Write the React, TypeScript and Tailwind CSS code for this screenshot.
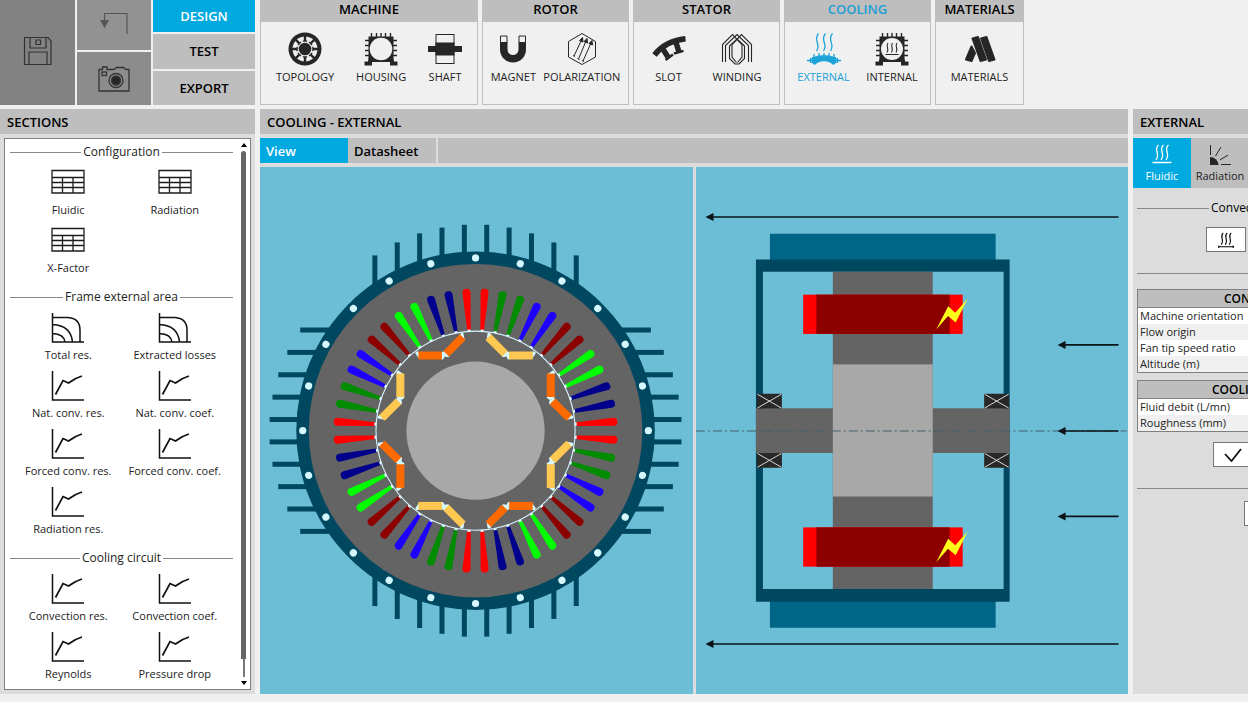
import type { ReactNode } from "react";

const INK = "#262626";

/* ---------- toolbar icons ---------- */

function SaveIcon() {
  return (
    <svg width="30" height="30" viewBox="0 0 30 30" fill="none" stroke="#333" strokeWidth="1.2" aria-hidden="true">
      <path d="M1.5 1.5H25l3 3.500v23.500H1.500z" />
      <path d="M7 1.500v10.500h16V1.500M13 4h4.500v4.500H13zM6 28.500V16h18v12.500" />
    </svg>
  );
}

function UndoIcon() {
  return (
    <svg width="30" height="24" viewBox="0 0 30 24" fill="none" stroke="#555" strokeWidth="1.200" aria-hidden="true">
      <path d="M28 23V2.500H5.500V10" />
      <path d="M2 9.500h7L5.500 16z" fill="#555" stroke="#555" />
    </svg>
  );
}

function CameraIcon() {
  return (
    <svg width="34" height="28" viewBox="0 0 34 28" fill="none" stroke="#333" strokeWidth="1.300" aria-hidden="true">
      <path d="M2 4.500h3.500V2h4.500v2.500h7L19.500 2.500h7l2.500 2h3V26H2z" />
      <rect x="5" y="7" width="4.500" height="3.500" />
      <circle cx="19" cy="15.500" r="7" />
      <circle cx="19" cy="15.500" r="4.500" fill={INK} />
    </svg>
  );
}

function TopologyIcon() {
  const spokes = Array.from({ length: 8 }, (_, i) => i * 45);
  return (
    <svg width="34" height="34" viewBox="0 0 34 34" aria-hidden="true">
      <circle cx="17" cy="17" r="16.500" fill={INK} />
      <circle cx="17" cy="17" r="12.500" fill="#f0f0f0" />
      {spokes.map((a) => (
        <path key={a} d="M15.800 4h2.400v4.500h1v1.300h-4.400V8.500h1z" fill={INK} transform={`rotate(${a} 17 17)`} />
      ))}
      <circle cx="17" cy="17" r="6.300" fill={INK} />
    </svg>
  );
}

function FrameIcon({ children, hole = 11.3 }: { children?: ReactNode; hole?: number }) {
  return (
    <svg width="34" height="34" viewBox="0 0 34 34" aria-hidden="true">
      <path d="M7.500 1v5M12.500 1v5M17 1v5M21.500 1v5M26.500 1v5M1 8.500h5M1 13.500h5M1 18.500h5M1 23.500h5M28 8.500h5M28 13.500h5M28 18.500h5M28 23.500h5" stroke={INK} strokeWidth="1.400" />
      <path d="M4.500 4.500h25v21l.500 4h3.500v4H26V30H8v3.500H.500v-4H4l.500-4z" fill={INK} />
      <circle cx="17" cy="17" r={hole} fill="#f0f0f0" />
      {children}
    </svg>
  );
}

function InternalIcon() {
  return (
    <FrameIcon hole={11}>
      <path d="M13 11c-3 4 2 5-1 9.500M17.500 11c-3 4 2 5-1 9.500M22 11c-3 4 2 5-1 9.500M10.500 22.500h13" fill="none" stroke={INK} strokeWidth="1.100" />
    </FrameIcon>
  );
}

function ShaftIcon() {
  return (
    <svg width="34" height="34" viewBox="0 0 34 34" aria-hidden="true">
      <rect x="8" y="2.500" width="18" height="29" fill="none" stroke={INK} strokeWidth="1" />
      <path d="M7.500 10.500h19V14H34v6h-7.500v3.500h-19V20H0v-6h7.500z" fill={INK} />
    </svg>
  );
}

function MagnetIcon() {
  return (
    <svg width="34" height="34" viewBox="0 0 34 34" aria-hidden="true">
      <path d="M4 10v7.500a13 13 0 0 0 26 0V10h-7.500v7.500a5.500 5.500 0 0 1-11 0V10z" fill={INK} />
      <path d="M4.500 4h6.500v6.500H4.500zM23 4h6.500v6.500H23z" fill="#f0f0f0" stroke={INK} />
    </svg>
  );
}

function PolarizationIcon() {
  return (
    <svg width="34" height="34" viewBox="0 0 34 34" fill="none" stroke={INK} strokeWidth="1" aria-hidden="true">
      <path d="M17 1.500l13.500 8v15.500L17 32.500 3.500 25V9.500z" />
      <path d="M9 24l7.500-16M13.500 27L21 9M18 29l8-18M8 23.500l2 1M12.500 26.500l2 1M17 28.500l2 1" />
      <path d="M17.500 5.500l-3 3 3.500 1.500zM22 6.500l-3 3 3.500 1.500zM27 8.500l-3 3 3.500 1.500z" fill={INK} />
    </svg>
  );
}

function SlotIcon() {
  return (
    <svg width="34" height="34" viewBox="0 0 34 34" fill="none" stroke={INK} aria-hidden="true">
      <path d="M2.500 23Q13 9 33.500 6.800" strokeWidth="5.500" />
      <path d="M9.500 15L16 25M23.500 9L27 20" strokeWidth="5.500" />
      <path d="M13.500 28L21 22.500M22 21.500L31.500 18.800" strokeWidth="2.400" />
    </svg>
  );
}

function WindingIcon() {
  return (
    <svg width="34" height="34" viewBox="0 0 34 34" fill="none" stroke={INK} strokeWidth="1.100" aria-hidden="true">
      <path d="M2.500 30V12.500L12.500 2.500 22 12.500V25L17.500 30.500M31.500 30V12.500L21.500 2.500 12 12.500V25l4.500 5.500" />
      <path d="M5.500 30V13.500L17 2.500l11.500 11V30" />
      <path d="M17 7l7.500 7v12.500L19 32h-4l-5.500-5.500V14z" />
    </svg>
  );
}

function ExternalIcon() {
  return (
    <svg width="34" height="34" viewBox="0 0 34 34" fill="none" stroke="#1ca4d8" aria-hidden="true">
      <path d="M11.500 1.500c-6 7 3 10-2 17.500M18.500 1.500c-6 7 3 10-2 17.500M25.500 1.500c-6 7 3 10-2 17.500" strokeWidth="1.300" />
      <path d="M4.500 25.500q12.500-5 25 0v5l-3 2.500q-9.500-8-19 0l-3-2.500z" fill="#1ca4d8" stroke="none" />
      <path d="M0 28.500h34M3.500 26v5M30.500 26v5" strokeWidth="1.300" />
      <path d="M7 22v4M12 21v4M17 21v4M22 21v4M27 22v4" strokeWidth="1.300" />
    </svg>
  );
}

function MaterialsIcon() {
  return (
    <svg width="34" height="34" viewBox="0 0 34 34" stroke={INK} fill={INK} strokeWidth="2" strokeLinejoin="round" aria-hidden="true">
      <path d="M8.500 14.500L12 21 8.500 29 3 27.500zM9.500 6.500L15 5l8 22.500-5.500 1.500zM18 6.500L23.500 5l8 22.500L26 29z" />
    </svg>
  );
}

/* ---------- section icons ---------- */

function TableIcon() {
  return (
    <svg width="34" height="32" viewBox="0 0 34 32" fill="none" stroke="#1c1c1c" strokeWidth="1.300" aria-hidden="true">
      <path d="M1 2.500h32V25H1zM1 9.500h32M1 14.500h32M1 19.500h32M11.500 9.500V25M22 9.500V25" />
    </svg>
  );
}

function AreaIcon() {
  return (
    <svg width="34" height="32" viewBox="0 0 34 32" fill="none" stroke="#111" strokeWidth="1.500" aria-hidden="true">
      <path d="M1.500 0v29H33M1.500 4.500H17Q29 5.500 29 17v12M1.500 11.500Q20 12.500 21.500 29M1.500 20.500Q13 21 14 29" />
    </svg>
  );
}

function ChartIcon() {
  return (
    <svg width="34" height="32" viewBox="0 0 34 32" fill="none" stroke="#111" strokeWidth="1.500" aria-hidden="true">
      <path d="M1.500 0v29H33" />
      <path d="M4.500 23.500L12 9.500l5.500 2.500Q24 7 31 5" strokeWidth="1.700" />
    </svg>
  );
}

function HeatIcon({ small = false }: { small?: boolean }) {
  return (
    <svg width={small ? 16 : 20} height={small ? 16 : 20} viewBox="0 0 20 20" fill="none" stroke="currentColor" strokeWidth="1.300" aria-hidden="true">
      <path d="M6.500 1C1 6 9 9 4 16M11.500 1C6 6 14 9 9 16M16.500 1c-5.500 5 2.500 8-2.500 15M.500 18.500h19" />
      {small && <path d="M1 17v3M19 17v3" />}
    </svg>
  );
}

function RadiationIcon() {
  return (
    <svg width="22" height="22" viewBox="0 0 22 22" fill="none" stroke={INK} aria-hidden="true">
      <path d="M1.500 1v10M6.500 12L12 3M11 16l8-5M12 20.500h10" />
      <path d="M1 13a8.500 8.500 0 0 1 8.500 8H1z" fill={INK} stroke="none" />
    </svg>
  );
}

/* ---------- ribbon ---------- */

type Tool = { label: string; icon: ReactNode };

function RibbonGroup({ title, width, tools, active }: { title: string; width: string; tools: Tool[]; active?: string }) {
  return (
    <section className={`flex flex-col ${width}`}>
      <h2 className={`h-[21px] bg-[#bebebe] text-center text-[13px] leading-[19px] font-semibold ${active ? "text-[#1c9fd6]" : "text-black"}`}>{title}</h2>
      <div className="flex flex-1 items-start justify-around border border-[#bebebe] bg-[#f0f0f0] px-1 pt-[10px]">
        {tools.map((t) => (
          <button key={t.label} type="button" className={`flex flex-col items-center gap-[3px] text-[11px] leading-4 ${t.label === active ? "text-[#1c9fd6]" : "text-[#222]"}`}>
            {t.icon}
            {t.label}
          </button>
        ))}
      </div>
    </section>
  );
}

/* ---------- sections panel ---------- */

type Item = { label: string; icon: ReactNode };

const sections: { title: string; items: Item[] }[] = [
  {
    title: "Configuration",
    items: ["Fluidic", "Radiation", "X-Factor"].map((label) => ({ label, icon: <TableIcon /> })),
  },
  {
    title: "Frame external area",
    items: [
      { label: "Total res.", icon: <AreaIcon /> },
      { label: "Extracted losses", icon: <AreaIcon /> },
      ...["Nat. conv. res.", "Nat. conv. coef.", "Forced conv. res.", "Forced conv. coef.", "Radiation res."].map((label) => ({ label, icon: <ChartIcon /> })),
    ],
  },
  {
    title: "Cooling circuit",
    items: ["Convection res.", "Convection coef.", "Reynolds", "Pressure drop"].map((label) => ({ label, icon: <ChartIcon /> })),
  },
];

function SectionsPanel() {
  return (
    <aside className="flex flex-col bg-[#dcdcdc]">
      <h2 className="h-[25px] bg-[#bebebe] px-[7px] text-[13px] leading-[26px] font-semibold">SECTIONS</h2>
      <div className="m-1 flex flex-1 border border-[#808080] bg-white">
        <div className="flex flex-1 flex-col gap-[13px] py-[5px] pl-[5px]">
          {sections.map((s) => (
            <section key={s.title}>
              <h3 className="flex h-4 items-center gap-[2px] text-xs leading-4 text-[#222]">
                <span className="h-px flex-1 bg-[#888]" />
                {s.title}
                <span className="h-px flex-1 bg-[#888]" />
              </h3>
              <div className="grid grid-cols-2 px-[5px]">
                {s.items.map((it) => (
                  <button key={it.label} type="button" className="flex h-[58px] flex-col items-center gap-[2px] pt-2 text-[11px] leading-4 whitespace-nowrap text-[#222]">
                    {it.icon}
                    {it.label}
                  </button>
                ))}
              </div>
            </section>
          ))}
        </div>
        <div className="ml-2 flex w-[9px] flex-col items-center pt-1 pr-1 pb-1" aria-hidden="true">
          <svg width="6" height="4" viewBox="0 0 6 4"><path d="M0 4L3 0l3 4z" /></svg>
          <span className="mt-1 w-[5px] flex-1 rounded-t-sm bg-[#666]" />
          <span className="mb-1 h-[18px] w-[2px] bg-[#777]" />
          <svg width="6" height="4" viewBox="0 0 6 4"><path d="M0 0l3 4 3-4z" /></svg>
        </div>
      </div>
    </aside>
  );
}

/* ---------- machine drawings ---------- */

const CX = 475.8;
const CY = 430.7;
const PHASES = ["#ff0000", "#008c00", "#1e00ff", "#8c0000", "#00ff00", "#00008c"];
const FIN_OFFSETS = [-100.8, -78.4, -56, -33.6, -11.2, 11.2, 33.6, 56, 78.4, 100.8];

function RadialView() {
  return (
    <svg className="h-full w-full bg-[#6cbdd6]" viewBox="260 167 433 527" role="img" aria-label="Radial view">
      <g transform={`translate(${CX} ${CY})`}>
        {[0, 90, 180, 270].map((a) => (
          <g key={a} transform={`rotate(${a})`} fill="#004860">
            {FIN_OFFSETS.map((x) => {
              const r = Math.sqrt(179.5 * 179.5 - x * x);
              return <rect key={x} x={x - 2.5} y={-r - 27} width="5" height="36" />;
            })}
          </g>
        ))}
        <circle r="179.500" fill="#004860" />
        <circle r="167" fill="#646464" />
        {Array.from({ length: 24 }, (_, i) => (
          <circle key={i} cy="-173" r="3.600" fill="#d5f8ff" transform={`rotate(${i * 15})`} />
        ))}
        {Array.from({ length: 48 }, (_, i) => (
          <g key={i} transform={`rotate(${i * 7.5 - 3.75})`}>
            <path d="M-1.800-101L-4-138.300a4 4 0 0 1 8 0L1.800-101z" fill={PHASES[Math.floor(i / 2) % 6]} />
            <rect x="-1.500" y="-101.500" width="3" height="2" fill="#e4faff" />
          </g>
        ))}
        <circle r="99.700" fill="none" stroke="#d5f4ff" strokeWidth="1.100" />
        {Array.from({ length: 8 }, (_, i) => {
          const fill = i % 2 === 0 ? "#ff6a00" : "#ffc850";
          return (
            <g key={i} transform={`rotate(${i * 45 - 22.5})`}>
              {[1, -1].map((s) => (
                <g key={s} transform={`scale(${s} 1)`}>
                  <g transform="translate(0 -81.500) rotate(-22.500)">
                    <path d="M1-3L3-4 3 4 1.500 4-.500 1z" fill="#d8fbff" />
                    <path d="M25.500-4h2q2 .500 1.500 2l-3.500 5z" fill="#d8fbff" />
                    <rect x="2.500" y="-4" width="23.500" height="8" fill={fill} />
                  </g>
                </g>
              ))}
            </g>
          );
        })}
        <circle r="69.200" fill="#a8a8a8" />
      </g>
    </svg>
  );
}

function Arrow({ x, y }: { x: number; y: number }) {
  return (
    <g>
      <path d={`M${x + 5} ${y}H1118`} stroke="#0a1418" strokeWidth="1.600" />
      <path d={`M${x} ${y}l8-4v8z`} fill="#0a1418" />
    </g>
  );
}

function AxialView() {
  return (
    <svg className="h-full w-full bg-[#6cbdd6]" viewBox="695 167 433 527" role="img" aria-label="Axial view">
      <Arrow x={704.5} y={216.7} />
      <path d="M769 233.500h226V262H769zM769 600h226v28H769z" fill="#006688" />
      <path fillRule="evenodd" d="M755 259.300h254V602H755zM762 271.500v317.700h241V271.500z" fill="#004860" />
      <path d="M832 271.500h100v317.700H832zM755 408.300h254v44.700H755z" fill="#646464" />
      <rect x="832" y="364.300" width="100" height="132.300" fill="#a8a8a8" />
      {[294.5, 527.5].map((y) => (
        <g key={y} transform={`translate(0 ${y})`}>
          <rect x="802.300" y="0" width="159.700" height="39.300" fill="#ff0000" />
          <rect x="815.500" y="0" width="133.500" height="39.300" fill="#8c0000" />
          <path d="M935.500 35l12-23.500 7 6.500 12.500-14-12 24-7.700-6.700z" fill="#ffff1a" />
        </g>
      ))}
      {[[756, 393.7], [983.5, 393.7], [756, 453], [983.5, 453]].map(([x, y]) => (
        <g key={`${x}-${y}`} transform={`translate(${x} ${y})`}>
          <rect width="25" height="14.800" fill="#282828" />
          <path d="M.500.500l24 13.800M24.500.500L.500 14.300" stroke="#d8d8d8" strokeWidth="1" />
        </g>
      ))}
      <path d="M695 431H1126" stroke="#44606a" strokeWidth="1" strokeDasharray="9 3 2 3" />
      <Arrow x={1057} y={344.8} />
      <Arrow x={1057} y={431} />
      <Arrow x={1057} y={516.5} />
      <Arrow x={704.5} y={644.3} />
    </svg>
  );
}

function Workspace() {
  return (
    <section className="flex min-w-0 flex-col bg-[#dcdcdc]">
      <h2 className="h-[25px] bg-[#bebebe] px-[7px] text-[13px] leading-[26px] font-semibold">COOLING - EXTERNAL</h2>
      <div className="my-1 flex h-[25px] bg-[#bebebe] text-[13px] leading-[26px] font-semibold" role="tablist">
        <button type="button" role="tab" aria-selected="true" className="w-[88px] bg-[#00a9e0] px-[6px] text-left text-white">View</button>
        <button type="button" role="tab" aria-selected="false" className="w-[90px] border-r-2 border-[#dcdcdc] px-[6px] text-left">Datasheet</button>
      </div>
      <div className="grid flex-1 grid-cols-2 gap-[3px]">
        <RadialView />
        <AxialView />
      </div>
    </section>
  );
}

/* ---------- properties panel ---------- */

function PropertyTable({ title, rows, pad }: { title: string; rows: string[]; pad: string }) {
  return (
    <table className="w-full border-collapse border border-[#808080]">
      <thead>
        <tr className="h-[18px] border-b border-[#808080] bg-[#bebebe]">
          <th className={`p-0 text-left text-xs leading-[17px] font-semibold ${pad}`}>{title}</th>
        </tr>
      </thead>
      <tbody>
        {rows.map((r) => (
          <tr key={r} className="h-4 bg-white even:bg-[#f0f0f0]">
            <td className="px-[2px] py-0 text-[11px] leading-4 text-[#222]">{r}</td>
          </tr>
        ))}
      </tbody>
    </table>
  );
}

function PropertiesPanel() {
  return (
    <aside className="overflow-hidden bg-[#dcdcdc]">
      <div className="flex w-[264px] flex-col">
        <h2 className="h-[25px] bg-[#bebebe] px-[7px] text-[13px] leading-[26px] font-semibold">EXTERNAL</h2>
        <div className="mt-1 flex h-[50px] bg-[#bebebe] text-[11px] leading-4" role="tablist">
          <button type="button" role="tab" aria-selected="true" className="flex w-[58px] flex-col items-center justify-between bg-[#00a9e0] pt-[6px] pb-1 text-white">
            <HeatIcon />
            Fluidic
          </button>
          <button type="button" role="tab" aria-selected="false" className="flex w-[58px] flex-col items-center justify-between pt-[6px] pb-1 text-[#222]">
            <RadiationIcon />
            Radiation
          </button>
        </div>
        <div className="flex flex-col px-1">
          <h3 className="mt-3 flex h-4 items-center gap-[2px] text-xs leading-4">
            <span className="h-px w-[72px] bg-[#888]" />
            Convection
          </h3>
          <button type="button" aria-label="Convection" className="mt-[11px] ml-[69px] flex h-[25px] w-10 items-center justify-center border border-[#777] bg-white">
            <HeatIcon small />
          </button>
          <hr className="mt-[21px] mb-[15px] border-[#888]" />
          <PropertyTable title="CONVECTION" pad="pl-[86px]" rows={["Machine orientation", "Flow origin", "Fan tip speed ratio", "Altitude (m)"]} />
          <div className="h-[7px]" />
          <PropertyTable title="COOLING" pad="pl-[74px]" rows={["Fluid debit (L/mn)", "Roughness (mm)"]} />
          <button type="button" aria-label="Apply" className="mt-[10px] ml-[76px] flex h-[25px] w-10 items-center justify-center border border-[#777] bg-white">
            <svg width="18" height="14" viewBox="0 0 18 14" fill="none" stroke="#111" strokeWidth="1.800" aria-hidden="true"><path d="M1 6l6.500 7L17 1" /></svg>
          </button>
          <hr className="mt-[21px] mb-3 border-[#888]" />
          <button type="button" aria-label="More" className="ml-[107px] h-[25px] w-10 border border-[#777] bg-white" />
        </div>
      </div>
    </aside>
  );
}

export default function App() {
  return (
    <div className="flex min-h-screen flex-col gap-1 overflow-hidden bg-[#f0f0f0] pb-2 font-['Open_Sans','Noto_Sans',sans-serif] text-black">
      <header className="flex h-[105px]">
        <div className="mr-[5px] flex w-[255px] shrink-0 gap-[2px]">
          <button type="button" aria-label="Save" className="flex w-[75px] items-center justify-center bg-[#828282] pb-1">
            <SaveIcon />
          </button>
          <div className="flex w-[74px] flex-col gap-[2px]">
            <button type="button" aria-label="Undo" className="flex h-[50px] items-center justify-center bg-[#929292] pb-1">
              <UndoIcon />
            </button>
            <button type="button" aria-label="Screenshot" className="flex flex-1 items-center justify-center bg-[#8c8c8c]">
              <CameraIcon />
            </button>
          </div>
          <nav className="flex flex-1 flex-col gap-[2px] text-[13px] leading-4 font-semibold">
            <button type="button" className="h-8 bg-[#00a9e0] text-white">DESIGN</button>
            <button type="button" className="flex-1 bg-[#bebebe]">TEST</button>
            <button type="button" className="flex-1 bg-[#bebebe]">EXPORT</button>
          </nav>
        </div>
        <div className="flex gap-1">
          <RibbonGroup title="MACHINE" width="w-[218px]" tools={[{ label: "TOPOLOGY", icon: <TopologyIcon /> }, { label: "HOUSING", icon: <FrameIcon /> }, { label: "SHAFT", icon: <ShaftIcon /> }]} />
          <RibbonGroup title="ROTOR" width="w-[147px]" tools={[{ label: "MAGNET", icon: <MagnetIcon /> }, { label: "POLARIZATION", icon: <PolarizationIcon /> }]} />
          <RibbonGroup title="STATOR" width="w-[147px]" tools={[{ label: "SLOT", icon: <SlotIcon /> }, { label: "WINDING", icon: <WindingIcon /> }]} />
          <RibbonGroup title="COOLING" width="w-[147px]" active="EXTERNAL" tools={[{ label: "EXTERNAL", icon: <ExternalIcon /> }, { label: "INTERNAL", icon: <InternalIcon /> }]} />
          <RibbonGroup title="MATERIALS" width="w-[89px]" tools={[{ label: "MATERIALS", icon: <MaterialsIcon /> }]} />
        </div>
      </header>
      <main className="grid flex-1 grid-cols-[255px_minmax(0,1fr)_115px] gap-[5px]">
        <SectionsPanel />
        <Workspace />
        <PropertiesPanel />
      </main>
    </div>
  );
}
